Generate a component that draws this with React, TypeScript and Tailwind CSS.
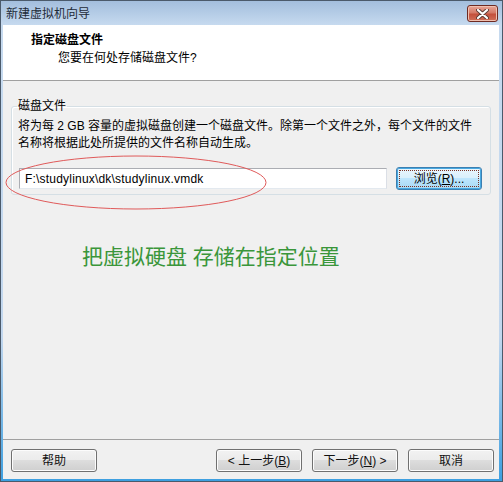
import React from "react";

const btn =
  "w-[86px] h-[23px] rounded-[3px] border border-[#707070] bg-[linear-gradient(#f2f2f2,#ebebeb_50%,#dddddd_50%,#cfcfcf)] shadow-[inset_0_0_0_1px_#fcfcfc] flex items-center justify-center text-[12px] leading-[14px] text-[#111]";

export default function App() {
  return (
    <div className="relative w-[503px] h-[482px] border border-[#4b5a6b] bg-[linear-gradient(#a3bedd_0px,#c6daef_24px,#c2d7ee_70%,#3d9fe0_100%)] flex flex-col font-[family-name:'Liberation_Sans','Noto_Sans_CJK_SC',sans-serif] text-[#1a1a1a] overflow-hidden">
      {/* title bar */}
      <div className="h-[24px] flex items-start justify-between pl-[5px] pr-[4px]">
        <div className="pt-[6px] text-[12px] leading-[14px] text-[#1e2a38]">新建虚拟机向导</div>
        <div className="mt-[4px] w-[31px] h-[17px] rounded-[3px] border border-[#6e2a22] bg-[linear-gradient(#e8a596,#d47a68_45%,#c4503c_55%,#d0705a)] shadow-[inset_0_0_0_1px_#f0c0b0] flex items-center justify-center">
          <svg width="13" height="10" viewBox="0 0 13 10">
            <path d="M2 1 L11 9 M11 1 L2 9" stroke="#5a3a35" strokeWidth="4" strokeLinecap="round" />
            <path d="M2 1 L11 9 M11 1 L2 9" stroke="#ffffff" strokeWidth="2.2" strokeLinecap="round" />
          </svg>
        </div>
      </div>

      {/* client area */}
      <div className="flex-1 flex flex-col ml-[2px] mr-[3px] mb-[2px] bg-[#f0f0f0]">
        {/* header */}
        <div className="h-[55px] bg-white flex flex-col pt-[7px]">
          <div className="pl-[28px] text-[12px] leading-[16px] font-bold text-black">指定磁盘文件</div>
          <div className="pl-[55px] mt-[2px] text-[12px] leading-[16px] text-black">您要在何处存储磁盘文件?</div>
        </div>
        <div className="h-[1px] bg-[#a0a0a0]" />

        {/* body */}
        <div className="flex-1 flex flex-col px-[8px]">
          <fieldset className="mt-[18px] border border-[#d5dfe5] rounded-[3px] pl-[5px] pr-[5px] pb-[4px] shadow-[inset_1px_1px_0_#ffffff]">
            <legend className="px-[1px] text-[12px] leading-[14px] text-black">磁盘文件</legend>
            <div className="mt-[5px] ml-[1px] text-[12px] leading-[17px] text-black">
              将为每 2 GB 容量的虚拟磁盘创建一个磁盘文件。除第一个文件之外，每个文件的文件
              <br />
              名称将根据此处所提供的文件名称自动生成。
            </div>
            <div className="mt-[15px] ml-[2px] flex items-center gap-[9px]">
              <div className="w-[368px] h-[21px] border border-[#abadb3] border-b-[#e3e9ef] border-r-[#dbdfe6] bg-white flex items-center pl-[5px] text-[12px] leading-[14px] tracking-[0.2px] text-black">
                F:\studylinux\dk\studylinux.vmdk
              </div>
              <div className="w-[86px] h-[23px] rounded-[3px] border border-[#3c7fb1] bg-[linear-gradient(#eaf6fd,#d9f0fc_50%,#bee6fd_50%,#a7d9f5)] shadow-[inset_0_0_0_1px_#48a8e0] p-[2px]">
                <div className="w-full h-full border border-dotted border-[#7a3426] flex items-center justify-center text-[12px] leading-[14px] text-black">
                  浏览(<span className="underline">R</span>)...
                </div>
              </div>
            </div>
          </fieldset>

          <div className="mt-[48px] pl-[71px] text-[21px] leading-[28px] text-[#3a963a]">
            把虚拟硬盘 存储在指定位置
          </div>
        </div>

        {/* footer */}
        <div className="h-[1px] bg-[#a0a0a0]" />
        <div className="h-[39px] flex items-start pt-[9px] pl-[8px] pr-[5px]">
          <div className={btn}>帮助</div>
          <div className="flex-1" />
          <div className={btn}>
            &lt; 上一步(<span className="underline">B</span>)
          </div>
          <div className="w-[10px]" />
          <div className={btn}>
            下一步(<span className="underline">N</span>) &gt;
          </div>
          <div className="w-[10px]" />
          <div className={btn}>取消</div>
        </div>
      </div>

      {/* red annotation ellipse */}
      <svg className="absolute left-[4px] top-[154px]" width="263" height="56" viewBox="0 0 263 56">
        <ellipse cx="131" cy="27.5" rx="130" ry="26.5" fill="none" stroke="#e05a5a" strokeWidth="1" />
      </svg>
    </div>
  );
}
